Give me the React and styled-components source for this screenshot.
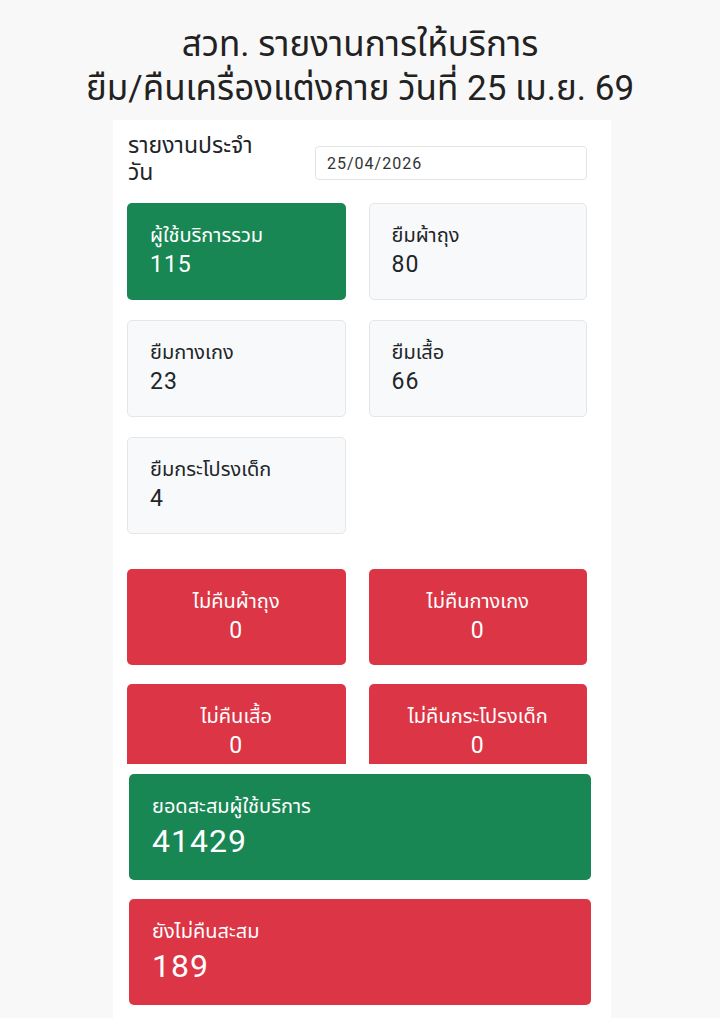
import React from "react";
import styled, { createGlobalStyle } from "styled-components";

const GlobalStyle = createGlobalStyle`
  body {
    margin: 0;
    background: #f8f8f8;
    font-family: Roboto, "Noto Sans", "Noto Sans Thai", sans-serif;
    color: #212529;
  }
`;

const Title = styled.h1`
  margin: 0;
  padding-top: 23px;
  height: 97px;
  text-align: center;
  font-size: 35px;
  line-height: 44px;
  font-weight: 400;
  color: #222;
`;

const Panel = styled.main`
  width: 498px;
  margin: 0 0 0 113px;
  background: #fff;
  padding-top: 12px;
  min-height: 898px;
  box-sizing: border-box;
`;

const Header = styled.div`
  display: flex;
  align-items: flex-start;
  padding: 0 24px 0 15px;
`;

const HeaderLabel = styled.label`
  width: 187px;
  padding-right: 40px;
  box-sizing: border-box;
  font-size: 23px;
  line-height: 27px;
`;

const DateInput = styled.div`
  flex: 1;
  margin-top: 14px;
  height: 34px;
  box-sizing: border-box;
  border: 1px solid #e3e3e3;
  border-radius: 4px;
  padding: 0 11px;
  display: flex;
  align-items: center;
  font-size: 16px;
  letter-spacing: 1px;
  color: #333;
`;

const Grid = styled.div`
  display: grid;
  grid-template-columns: 1fr 1fr;
  column-gap: 23px;
  row-gap: ${p => p.$rowGap}px;
  padding: 0 24px 0 14px;
  margin-top: ${p => p.$top}px;
  ${p => p.$clip && `height: ${p.$clip}px; overflow: hidden;`}
`;

const Card = styled.div`
  height: ${p => p.$h}px;
  box-sizing: border-box;
  border-radius: 5px;
  padding: 18px 22px 0;
  text-align: ${p => (p.$center ? "center" : "left")};
  background: ${p =>
    p.$tone === "green" ? "#198754" : p.$tone === "red" ? "#dc3545" : "#f8f9fa"};
  color: ${p => (p.$tone ? "#fff" : "#212529")};
  border: 1px solid ${p => (p.$tone ? "transparent" : "#e5e6e8")};
`;

const CardLabel = styled.div`
  font-size: 20px;
  line-height: 26px;
`;

const CardValue = styled.div`
  font-size: ${p => p.$size || 23}px;
  line-height: ${p => (p.$size ? 40 : 30)}px;
  letter-spacing: 1px;
  margin-top: 2px;
`;

const Totals = styled.div`
  display: flex;
  flex-direction: column;
  gap: 19px;
  padding: 10px 20px 14px 16px;
`;

const daily = [
  { label: "ผู้ใช้บริการรวม", value: 115, tone: "green" },
  { label: "ยืมผ้าถุง", value: 80 },
  { label: "ยืมกางเกง", value: 23 },
  { label: "ยืมเสื้อ", value: 66 },
  { label: "ยืมกระโปรงเด็ก", value: 4 },
];

const unreturned = [
  { label: "ไม่คืนผ้าถุง", value: 0 },
  { label: "ไม่คืนกางเกง", value: 0 },
  { label: "ไม่คืนเสื้อ", value: 0 },
  { label: "ไม่คืนกระโปรงเด็ก", value: 0 },
];

const totals = [
  { label: "ยอดสะสมผู้ใช้บริการ", value: 41429, tone: "green" },
  { label: "ยังไม่คืนสะสม", value: 189, tone: "red" },
];

export default function App() {
  return (
    <>
      <GlobalStyle />
      <Title>
        สวท. รายงานการให้บริการ
        <br />
        ยืม/คืนเครื่องแต่งกาย วันที่ 25 เม.ย. 69
      </Title>
      <Panel>
        <Header>
          <HeaderLabel>รายงานประจำวัน</HeaderLabel>
          <DateInput>25/04/2026</DateInput>
        </Header>
        <Grid $top={17} $rowGap={20}>
          {daily.map(d => (
            <Card key={d.label} $h={97} $tone={d.tone}>
              <CardLabel>{d.label}</CardLabel>
              <CardValue>{d.value}</CardValue>
            </Card>
          ))}
        </Grid>
        <Grid $top={35} $rowGap={19} $clip={195}>
          {unreturned.map(d => (
            <Card key={d.label} $h={96} $tone="red" $center>
              <CardLabel>{d.label}</CardLabel>
              <CardValue>{d.value}</CardValue>
            </Card>
          ))}
        </Grid>
        <Totals>
          {totals.map(d => (
            <Card key={d.label} $h={106} $tone={d.tone}>
              <CardLabel>{d.label}</CardLabel>
              <CardValue $size={32}>{d.value}</CardValue>
            </Card>
          ))}
        </Totals>
      </Panel>
    </>
  );
}
